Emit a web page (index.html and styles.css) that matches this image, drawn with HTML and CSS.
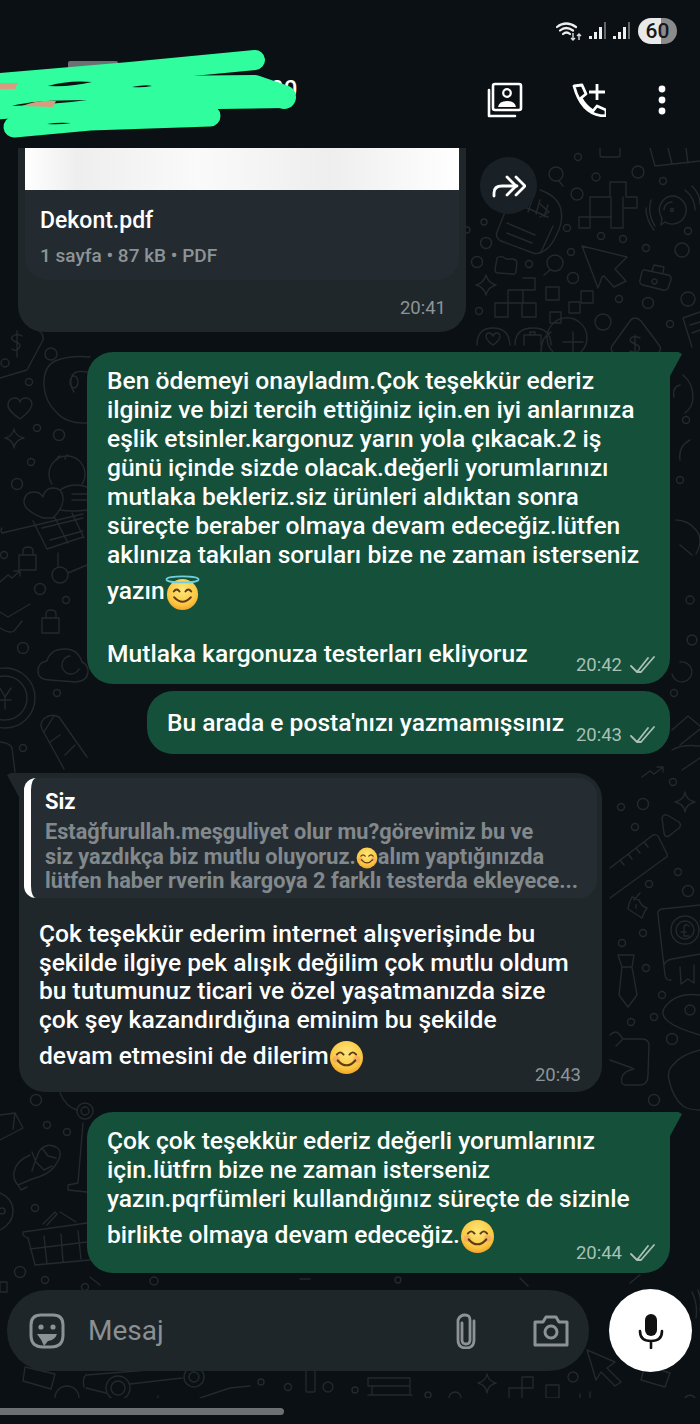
FILE: index.html
```html
<!DOCTYPE html>
<html lang="tr">
<head>
  <meta charset="UTF-8">
  <meta name="viewport" content="width=device-width, initial-scale=1.0">
  <title>Sohbet</title>
  <link rel="stylesheet" href="styles.css">
</head>
<body>

  <!-- Emoji tanimlari -->
  <svg class="defs" width="0" height="0">
    <defs>
      <radialGradient id="face" cx="50%" cy="35%" r="70%">
        <stop offset="0" stop-color="#fde77a"/>
        <stop offset="0.7" stop-color="#fbc53f"/>
        <stop offset="1" stop-color="#f09a22"/>
      </radialGradient>
      <symbol id="emoji-smile" viewBox="0 0 36 36">
        <circle cx="18" cy="18" r="17" fill="url(#face)"/>
        <path d="M8 15q3.500-4.500 7 0M21 15q3.500-4.500 7 0" fill="none" stroke="#5b3a17" stroke-width="2" stroke-linecap="round"/>
        <circle cx="7.500" cy="20" r="3.500" fill="#f59a6a" opacity=".6"/>
        <circle cx="28.500" cy="20" r="3.500" fill="#f59a6a" opacity=".6"/>
        <path d="M9 21q9 10 18 0" fill="none" stroke="#5b3a17" stroke-width="2.200" stroke-linecap="round"/>
      </symbol>
      <symbol id="emoji-halo" viewBox="0 0 36 36">
        <circle cx="18" cy="20" r="16" fill="url(#face)"/>
        <ellipse cx="18" cy="4.500" rx="16.500" ry="3.200" fill="none" stroke="#6fd0dc" stroke-width="1.800"/>
        <path d="M9 17q3-4 6 0M21 17q3-4 6 0" fill="none" stroke="#5b3a17" stroke-width="2" stroke-linecap="round"/>
        <path d="M9.500 23q8.500 9 17 0" fill="none" stroke="#5b3a17" stroke-width="2.200" stroke-linecap="round"/>
      </symbol>
      <symbol id="ticks" viewBox="0 0 28 18">
        <path d="M1 10l6 6L18 2M11 16L24 1M7 16h4" fill="none" stroke="currentColor" stroke-width="1.800" stroke-linecap="round" stroke-linejoin="round"/>
      </symbol>
    </defs>
  </svg>

  <div class="app">
    <header class="topbar">
      <div class="status">
        <svg class="status-wifi" viewBox="0 0 26 20" width="26" height="20">
          <path d="M1 6q9-7 19 0M4 9.500q6-5 13 0M7 13q3.500-3 7 0" fill="none" stroke="#eee" stroke-width="2.200" stroke-linecap="round"/>
          <path d="M17 12v7m-2-2l2 2 2-2M23 19v-6m-2 2l2-2 2 2" fill="none" stroke="#ddd" stroke-width="1.400"/>
        </svg>
        <svg class="status-bars" viewBox="0 0 18 18" width="18" height="18">
          <path d="M0 14h3v3H0zM5 10h3v7H5zM10 5h3v12h-3z" fill="#eee"/><path d="M15 0h2v17h-2z" fill="#666"/>
        </svg>
        <svg class="status-bars" viewBox="0 0 18 18" width="18" height="18">
          <path d="M0 14h3v3H0zM5 10h3v7H5zM10 5h3v12h-3z" fill="#eee"/><path d="M15 0h2v17h-2z" fill="#666"/>
        </svg>
        <div class="battery">60</div>
      </div>

      <div class="toolbar">
        <div class="contact">
          <span class="contact-digits">00</span>
        </div>
        <div class="toolbar-icons">
          <svg viewBox="0 0 36 36" width="36" height="36">
            <rect x="6" y="2" width="28" height="26" rx="2" fill="none" stroke="#fff" stroke-width="2.600"/>
            <path d="M2 8v26h26" fill="none" stroke="#fff" stroke-width="2.600" stroke-linecap="round" stroke-linejoin="round"/>
            <circle cx="20" cy="11" r="3.800" fill="none" stroke="#fff" stroke-width="2.200"/>
            <path d="M11 25q1-6 9-6t9 6z" fill="#fff"/>
          </svg>
          <svg viewBox="0 0 34 34" width="34" height="34">
            <path d="M2 3l8-1 4 9-5 4q4 8 12 13l4-5 9 4v6Q10 33 2 3z" fill="none" stroke="#fff" stroke-width="2.800" stroke-linejoin="round"/>
            <path d="M25 1v16M17 9h16" fill="none" stroke="#fff" stroke-width="2.800"/>
          </svg>
          <svg class="icon-dots" viewBox="0 0 8 30" width="8" height="30">
            <circle cx="4" cy="4" r="3.400" fill="#fff"/>
            <circle cx="4" cy="15" r="3.400" fill="#fff"/>
            <circle cx="4" cy="26" r="3.400" fill="#fff"/>
          </svg>
        </div>
      </div>

      <!-- Karalanmis kisi adi -->
      <svg class="scribble" viewBox="0 0 300 145" width="300" height="145">
        <rect x="68" y="61" width="50" height="10" rx="2" fill="#6c7073"/>
        <g fill="none" stroke="#2ffd9e" stroke-linecap="round" stroke-linejoin="round">
          <path d="M-10 84L130 72 255 60" stroke-width="20"/>
          <path d="M-10 98L150 88 255 87 284 97" stroke-width="24"/>
          <path d="M-10 112L140 102 284 100" stroke-width="16"/>
          <path d="M14 127L90 120 210 116" stroke-width="21"/>
        </g>
        <path d="M48 86q20-6 44-4-20 5-44 4zM132 87q15-3 20-1-10 2-20 1zM12 106q20-6 75-6-30 4-75 6zM47 124q10-2 24-1-10 2-24 1z" fill="#0b1014"/>
        <path d="M0 83h18l-3 6H0zM22 106q15-6 34-5l-3 6z" fill="#d99a7e"/>
      </svg>
    </header>

    <main class="chat">
      <!-- Duvar kagidi deseni, sayfa koordinatlarinda -->
      <svg class="wallpaper" width="700" height="1250" viewBox="0 148 700 1250">
        <g class="doodles">
          <!-- sag ust -->
          <circle cx="556" cy="174" r="7"/><path d="M559 181l4 5"/>
          <circle cx="577" cy="194" r="6"/><circle cx="596" cy="177" r="4"/><circle cx="638" cy="172" r="6"/><circle cx="578" cy="157" r="3.500"/><circle cx="663" cy="181" r="3.500"/>
          <path d="M650 148l5 18 45-5M668 148l4 16M686 148l2 15M600 148v7q0 2 2 2h16q2 0 2-2v-7"/>
          <path d="M590 217v-20h20v-15h16v15h11v11h-14v20h-12v-11h-21v11h-11v-11h11"/>
          <path d="M611 197v20M623 197v11"/>
          <path d="M672 196a14 14 0 1 1-7 26l-4 3 1-7a14 14 0 0 1 10-22z"/><circle cx="672" cy="210" r="1.500"/><path d="M664 210a8 8 0 0 1 8-8M651 200q-4 14 4 26M646 208q0 12 8 22M685 190q10 8 10 20M692 186q8 8 8 18"/>
          <circle cx="567" cy="228" r="3.500"/><circle cx="601" cy="236" r="3.500"/><circle cx="623" cy="239" r="3.500"/><circle cx="646" cy="248" r="3.500"/><circle cx="688" cy="231" r="3.500"/><circle cx="682" cy="250" r="7"/><circle cx="571" cy="252" r="3.500"/>
          <path d="M582 246l45 11-12 12 11 12-12 6-10-11-2 1-4 11z"/>
          <path d="M645 270l23 5q4 1 3 5l-3 8q-1 3-5 2l-20-5q-4-1-3-5l2-8q1-3 3-2zM652 271l2-6 10 2-1 6M652 281a2.500 2.500 0 1 0 5 1 2.500 2.500 0 1 0-5-1z"/>
          <circle cx="555" cy="263" r="8"/><path d="M550 270l-6 5"/>
          <circle cx="573" cy="278" r="5.500"/><rect x="546" y="287" width="13" height="13"/><rect x="550" y="312" width="11" height="11"/><rect x="569" y="302" width="11" height="11"/><rect x="581" y="291" width="12" height="12"/>
          <circle cx="619" cy="299" r="3.500"/><circle cx="648" cy="303" r="5.500"/><circle cx="688" cy="299" r="7"/><circle cx="603" cy="322" r="8"/><circle cx="670" cy="324" r="3.500"/>
          <path d="M635 318q-3 0-5 3l-18 25q-2 4 1 6M635 318q3 0 6 3l18 24q3 4 0 7M635 335v18M640 338q-6-3-9 0t4 6q6 2 4 6t-9 1"/>
          <path d="M553 352a20 20 0 1 1 28 0M573 332v20M563 342h20M551 332q-10 5-10 20M683 318l17-6M683 318l9 29M690 325l10-3M692 333l8-3"/>
          <path d="M540 190q18 6 21 20 3 12-6 28-6 12-15 15M540 204l9 8-9 5"/>
          <!-- belge ile ileri arasi -->
          <circle cx="484" cy="222" r="3"/><circle cx="486" cy="243" r="5.500"/><circle cx="477" cy="262" r="5.500"/><circle cx="467" cy="230" r="3"/><circle cx="529" cy="264" r="3.500"/>
          <path d="M505 212l-8 20q-2 6 4 9l32 12q6 2 9-3l11-24"/><path d="M507 223l28 12M507 233l25 10M520 205l28 12M524 200l-4 10M532 200l-4 12M540 200l-4 14M548 205l-4 12"/>
          <path d="M497 258q2-2 6-1l3 2h6q4 0 5 3l-1 9q0 4-4 3l-13-1q-4 0-4-3z"/>
          <path d="M486 275q2 8 10 10-8 2-10 10-2-8-10-10 8-2 10-10z"/><circle cx="479" cy="311" r="3.500"/>
          <path d="M523 278h12v12h-12v13h13v14h-14v-14h-14v14h-13v-14h13v-13h15"/>
          <path d="M477 345q0-17 16-17t17 17M493 345q-6-4-7-8 0-4 3-4t4 3q1-3 4-3t3 4q-1 4-7 8M515 345q0-17 18-17t18 17M524 345v-10h17v10M530 335v-3h5v3"/>
          <!-- sol -->
          <path d="M0 378l27-8 16-30q1-6-5-10M17 331v26M22 336q-5-3-9 0t3 6q6 2 3 6t-7 1"/>
          <circle cx="51" cy="354" r="6"/><circle cx="5" cy="363" r="4"/><circle cx="29" cy="382" r="3.500"/>
          <path d="M90 357q-20-2-35 4-12 6-11 25 1 16 14 28 10 10 29 9M87 372q-15-3-16 8-1 6 3 12M70 382a4 6 0 1 0 8 0 4 6 0 1 0-8 0z"/>
          <path d="M20 419q-13-9-12-15t7-6q4 0 5 4 1-4 6-4t6 6q0 6-12 15z"/>
          <path d="M14 429q1 7 10 9-9 2-10 10-1-8-9-10 8-2 9-9z"/>
          <circle cx="37" cy="428" r="3.500"/><circle cx="59" cy="435" r="5.500"/><circle cx="31" cy="462" r="3.500"/><circle cx="17" cy="484" r="5.500"/>
          <path d="M52 484a18 18 0 1 1 30 0M60 456q-3 1-3 4M68 455q-3 1-3 4"/>
          <path d="M43 518q-20-8-19-17t10-9q6 0 9 5 2-9 10-9 9 0 10 9 1 10-10 21zM60 490q12-8 27-3M60 510q12 2 27 0M72 494h15M72 500h15"/>
          <path d="M2 528q-2 2 0 5l81-19M33 521l14 28 36-12M42 528l41-10M50 540l33-9M54 516l14 27M72 513l12 25M58 553v14"/>
          <circle cx="60" cy="575" r="8"/><path d="M68 573l19-8"/>
          <path d="M19 555h17v15H19zM23 555v-4q0-4 5-4t5 4v4"/><circle cx="4" cy="555" r="3.500"/>
          <path d="M0 582l8-7 4 3 8-7M14 571h6v5"/>
          <circle cx="40" cy="589" r="5.500"/><circle cx="66" cy="600" r="3.500"/>
          <path d="M42 618h17v15H42zM46 618v-4q0-4 5-4t5 4v4"/>
          <path d="M0 612l8 5 22-13M0 628q10 6 14 3 5-6 8-10"/>
          <circle cx="23" cy="648" r="5.500"/>
          <path d="M50 680q-12 0-12-9t9-10q3-12 18-12 13 0 17 13 6 3 6 9 0 10-12 11zM70 656a9 9 0 1 0 9 13"/>
          <circle cx="57" cy="693" r="3.500"/><circle cx="5" cy="698" r="30"/><circle cx="5" cy="698" r="22"/>
          <path d="M0 688l5 9 6-9M5 697v12M0 700h11"/>
          <circle cx="23" cy="748" r="3.500"/>
          <path d="M0 742q10 1 12 6l3 24M45 718q-6 5-3 11l22 40M45 718q6-5 14-1l28 40M54 716l-10 16M60 735l-10 7M75 745l-10 10"/>
          <!-- sag orta -->
          <path d="M680 662a10 10 0 1 1-8 12M683 375q10 8 10 22 0 10-8 16M680 385q-8 2-6 12M690 440q-12 6-10 20M676 520q12 0 20 10t0 24M680 545l12 10"/>
          <circle cx="674" cy="693" r="3.500"/><circle cx="690" cy="600" r="4"/><circle cx="680" cy="480" r="3.500"/><circle cx="692" cy="640" r="5"/><circle cx="686" cy="420" r="3.500"/>
          <path d="M672 730l16-14 12 10M680 745l20-16M672 750q10-6 28-4M700 758l-18 12"/>
          <!-- sag alt -->
          <path d="M642 777l8-6 4 3 8-6M657 767h6v5"/><circle cx="673" cy="782" r="3.500"/>
          <path d="M685 792q1 8 10 10-9 2-10 10-1-8-10-10 9-2 10-10z"/><circle cx="643" cy="804" r="5.500"/><circle cx="621" cy="807" r="3.500"/><circle cx="635" cy="827" r="3.500"/>
          <path d="M662 818q1-4 5-3l12 7q3 3 0 6l-10 8q-4 2-5-3z"/>
          <path d="M610 868l43-33q3-1 5 1l9 18q1 3-2 4l-55 40M620 860l4 5M628 854l4 5M636 848l4 5M644 842l4 5"/>
          <circle cx="649" cy="884" r="3.500"/><circle cx="678" cy="872" r="3.500"/><circle cx="688" cy="891" r="5.500"/>
          <path d="M640 893l-6 7M632 897q-4 8-4 12l14 9q2-6 5-10-6-2-8-8zM636 905v3"/><circle cx="643" cy="933" r="3.500"/><circle cx="622" cy="943" r="3.500"/>
          <path d="M700 905l-38 4q-5 1-4 6l7 60q1 6 6 5M664 965q2-5 8-6l28-5M680 967l1 17 7-5 6 4v-18"/>
          <circle cx="685" cy="930" r="14"/><circle cx="685" cy="930" r="9"/><path d="M689 926q-5-3-5 2v8h5M681 932h5"/>
          <path d="M618 955h16l-2 12 5 28-9 12-9-12 3-28zM622 967h9"/>
          <circle cx="646" cy="968" r="3.500"/><circle cx="662" cy="995" r="3.500"/><circle cx="654" cy="1017" r="3.500"/><circle cx="631" cy="1022" r="3.500"/><circle cx="672" cy="1039" r="5.500"/><circle cx="654" cy="1100" r="5.500"/>
          <path d="M700 995q-24-3-35 12t35 28"/><circle cx="690" cy="1010" r="5"/>
          <path d="M610 1035q6-6 10 0l3 4h20q6 1 6 6l-1 30q0 10-8 10h-14q-6 0-4-8 2-6 12-8M610 1060l22 8M622 1040l-6 6"/>
          <path d="M700 1050q-20 5-28 16-5 6-3 14 4 18 14 26 6 4 17 4"/>
          <!-- sol alt -->
          <circle cx="36" cy="1100" r="5.500"/><circle cx="85" cy="1111" r="8"/><circle cx="85" cy="1111" r="4"/><path d="M60 1093q6 14 17 17"/>
          <path d="M0 1115l15-2 8 15-23 12M15 1113l-2 16"/><circle cx="47" cy="1125" r="3.500"/><circle cx="67" cy="1132" r="3.500"/>
          <path d="M18 1185l14-6q16-4 22-12 6-8 6-12 1-5-4-8-6-3-10-1-6 2-8 8-4 10-6 17M30 1155q-14 6-16 17-1 8 4 13M32 1152l4 10 8 8 8-4M42 1148l6 8 8 2M18 1185l3 5 6-3"/>
          <path d="M83 1123l-5 60-10 2v5l19 2"/>
          <circle cx="35" cy="1208" r="3.500"/><path d="M0 1193q13 6 13 18t-13 19"/><circle cx="2" cy="1211" r="3"/>
          <path d="M23 1232q-1 4 5 6l7 27 55-5M23 1232l64-9M43 1224l12-12 2 2-10 11M60 1212l16 10M44 1236l3 28M61 1234l2 28M78 1231l3 28M30 1249l57-7"/>
          <circle cx="20" cy="1272" r="5.500"/><circle cx="45" cy="1280" r="3.500"/><circle cx="85" cy="1287" r="3.500"/><rect x="0" y="1282" width="7" height="10"/>
          <path d="M90 1277l10 8M520 1278l8 8M300 1279h10M150 1281a4 4 0 1 0 8 0 4 4 0 1 0-8 0zM395 1280a3 3 0 1 0 6 0 3 3 0 1 0-6 0zM630 1283l10-8"/>
          <!-- alt serit -->
          <path d="M25 1367l30 7-4 15-28-8zM36 1370l1-4 8 2-1 4"/><path d="M55 1398a12 12 0 0 1 24 0"/>
          <path d="M86 1375l100-8q6 0 8 3M86 1375q-4 3-2 12M106 1393l-20-5M130 1384l52-6"/>
          <circle cx="118" cy="1388" r="12"/><circle cx="118" cy="1388" r="7"/><circle cx="194" cy="1377" r="10"/><circle cx="194" cy="1377" r="5"/>
          <path d="M200 1398l30-10 20-2M158 1398v-2"/>
          <circle cx="261" cy="1382" r="3"/><circle cx="288" cy="1387" r="3.500"/><rect x="306" y="1368" width="9" height="24" rx="1"/><circle cx="328" cy="1387" r="5"/><circle cx="355" cy="1390" r="3"/>
          <path d="M368 1378h42v8h-42zM372 1386h38v9h-38zM368 1395h44"/>
          <path d="M487 1374q1 7 9 9-8 2-9 10-1-8-9-10 8-2 9-9z"/><path d="M509 1398v-10h13v-11h11v11h-11v10"/>
          <rect x="546" y="1385" width="13" height="13"/><circle cx="573" cy="1377" r="5"/><circle cx="428" cy="1395" r="3"/><path d="M449 1398a6 6 0 0 1 12 0M580 1398v-4M590 1398v-6M685 1398a6 6 0 0 1 10 0"/>
          <path d="M587 1350l28 12-8 6 14 14-6 4-14-14-5 8z"/><path d="M645 1365l25 8-5 14-24-7zM654 1368l2-4 7 2-1 4M692 1292q6 12 4 26M698 1290q4 10 2 20"/>
        </g>
      </svg>

      <div class="messages">
        <div class="row-doc">
          <div class="bubble bubble-in bubble-doc">
            <div class="doc-preview"></div>
            <div class="doc-info">
              <div class="doc-name">Dekont.pdf</div>
              <div class="doc-meta">1 sayfa • 87 kB • PDF</div>
            </div>
            <div class="meta meta-doc"><span>20:41</span></div>
          </div>
          <div class="forward">
            <svg viewBox="0 0 34 24" width="34" height="24">
              <path d="M2 22v-3q0-7 8-7h15" fill="none" stroke="#fff" stroke-width="2.800" stroke-linecap="round"/>
              <path d="M15 3l9 9-9 9M24 3l9 9-9 9" fill="none" stroke="#fff" stroke-width="2.800" stroke-linecap="round" stroke-linejoin="round"/>
            </svg>
          </div>
        </div>

        <div class="bubble bubble-out bubble-tail msg-long">
          <p class="text">Ben ödemeyi onayladım.Çok teşekkür ederiz<br>ilginiz ve bizi tercih ettiğiniz için.en iyi anlarınıza<br>eşlik etsinler.kargonuz yarın yola çıkacak.2 iş<br>günü içinde sizde olacak.değerli yorumlarınızı<br>mutlaka bekleriz.siz ürünleri aldıktan sonra<br>süreçte beraber olmaya devam edeceğiz.lütfen<br>aklınıza takılan soruları bize ne zaman isterseniz<br>yazın<svg class="emoji"><use href="#emoji-halo"/></svg><br><br>Mutlaka kargonuza testerları ekliyoruz</p>
          <div class="meta"><span>20:42</span><svg class="tick"><use href="#ticks"/></svg></div>
        </div>

        <div class="bubble bubble-out msg-short">
          <p class="text">Bu arada e posta'nızı yazmamışsınız</p>
          <div class="meta"><span>20:43</span><svg class="tick"><use href="#ticks"/></svg></div>
        </div>

        <div class="bubble bubble-in bubble-tail-in msg-reply">
          <div class="quote">
            <div class="quote-name">Siz</div>
            <div class="quote-text">Estağfurullah.meşguliyet olur mu?görevimiz bu ve<br>siz yazdıkça biz mutlu oluyoruz.<svg class="emoji emoji-small"><use href="#emoji-smile"/></svg>alım yaptığınızda<br>lütfen haber rverin kargoya 2 farklı testerda ekleyece...</div>
          </div>
          <p class="text text-in">Çok teşekkür ederim internet alışverişinde bu<br>şekilde ilgiye pek alışık değilim çok mutlu oldum<br>bu tutumunuz ticari ve özel yaşatmanızda size<br>çok şey kazandırdığına eminim bu şekilde<br>devam etmesini de dilerim<svg class="emoji"><use href="#emoji-smile"/></svg></p>
          <div class="meta meta-in"><span>20:43</span></div>
        </div>

        <div class="bubble bubble-out bubble-tail msg-last">
          <p class="text">Çok çok teşekkür ederiz değerli yorumlarınız<br>için.lütfrn bize ne zaman isterseniz<br>yazın.pqrfümleri kullandığınız süreçte de sizinle<br>birlikte olmaya devam edeceğiz.<svg class="emoji"><use href="#emoji-smile"/></svg></p>
          <div class="meta"><span>20:44</span><svg class="tick"><use href="#ticks"/></svg></div>
        </div>
      </div>

      <div class="composer">
        <div class="composer-field">
          <svg class="composer-sticker" viewBox="0 0 36 36" width="36" height="36">
            <path d="M12 2h12q10 0 10 10v10Q34 34 22 34h-8Q2 34 2 22V12Q2 2 12 2z" fill="none" stroke="#8d9295" stroke-width="3"/>
            <circle cx="12" cy="14" r="2.600" fill="#8d9295"/><circle cx="24" cy="14" r="2.600" fill="#8d9295"/>
            <path d="M8 21h20q-2 6-9 7l-4 5q-2-6-7-12z" fill="#8d9295"/>
          </svg>
          <span class="composer-placeholder">Mesaj</span>
          <svg class="composer-clip" viewBox="0 0 24 36" width="24" height="36">
            <path d="M8 10v17q0 4 4 4t4-4V7q0-5-5-5T4 7v20q0 8 8 8t8-8V8" fill="none" stroke="#8d9295" stroke-width="2.800" stroke-linecap="round"/>
          </svg>
          <svg class="composer-camera" viewBox="0 0 36 32" width="36" height="32">
            <path d="M2 7h8l3-5h10l3 5h8v23H2z" fill="none" stroke="#8d9295" stroke-width="3" stroke-linejoin="round"/>
            <circle cx="18" cy="17" r="6" fill="none" stroke="#8d9295" stroke-width="3"/>
          </svg>
        </div>
        <button class="mic">
          <svg viewBox="0 0 26 36" width="26" height="36">
            <rect x="7" y="1" width="12" height="22" rx="6" fill="#111"/>
            <path d="M2 18q0 10 11 10t11-10M13 28v7" fill="none" stroke="#111" stroke-width="2.600" stroke-linecap="round"/>
          </svg>
        </button>
      </div>
    </main>

    <footer class="navbar">
      <div class="navbar-handle"></div>
    </footer>
  </div>

</body>
</html>
```

FILE: styles.css
```css
* {
  margin: 0;
  padding: 0;
  box-sizing: border-box;
}

html, body {
  height: 100%;
  background-color: #0b1014;
  font-family: Roboto, "Noto Sans", sans-serif;
  color: #fff;
}

.defs {
  display: block;
  height: 0;
}

.app {
  display: flex;
  flex-direction: column;
  width: 700px;
  height: 1424px;
  overflow: hidden;
}

/* Ust bar */
.topbar {
  position: relative;
  flex: 0 0 148px;
  background-color: #0b1014;
}

.status {
  display: flex;
  align-items: center;
  justify-content: flex-end;
  gap: 6px;
  height: 26px;
  margin-top: 18px;
  padding-right: 23px;
}

.status-wifi {
  margin-right: 1px;
}

.battery {
  width: 39px;
  height: 26px;
  border-radius: 13px;
  margin-left: 1px;
  background: linear-gradient(90deg, #e9e9e9 59%, #8b8b8b 59%);
  color: #15181a;
  font-size: 21px;
  font-weight: 500;
  line-height: 26px;
  text-align: center;
}

.toolbar {
  display: flex;
  align-items: center;
  justify-content: space-between;
  height: 40px;
  margin-top: 36px;
  padding-right: 34px;
}

.contact {
  padding-left: 270px;
  padding-bottom: 22px;
}

.contact-digits {
  font-size: 24px;
  font-weight: 500;
}

.toolbar-icons {
  display: flex;
  align-items: center;
  gap: 49px;
}

.icon-dots {
  margin-left: 3px;
}

.scribble {
  position: absolute;
  left: 0;
  top: 0;
}

/* Sohbet alani */
.chat {
  position: relative;
  display: flex;
  flex-direction: column;
  flex: 1;
  min-height: 0;
  background-color: #0b1014;
}

.wallpaper {
  position: absolute;
  left: 0;
  top: 0;
}

.doodles {
  fill: none;
  stroke: #23292d;
  stroke-width: 1.400;
  stroke-linecap: round;
  stroke-linejoin: round;
}

.messages {
  position: relative;
  display: flex;
  flex-direction: column;
  align-items: flex-end;
  flex: 1;
  min-height: 0;
  padding-right: 30px;
}

.bubble {
  position: relative;
  border-radius: 26px;
}

.bubble-out {
  background-color: #14503a;
  padding: 14px 12px 7px 20px;
}

.bubble-in {
  background-color: #1f272b;
}

.bubble-tail {
  border-top-right-radius: 0;
}

.bubble-tail::after {
  content: "";
  position: absolute;
  left: 100%;
  top: 0;
  width: 12px;
  height: 24px;
  background-color: #14503a;
  clip-path: polygon(0 0, 70% 0, 100% 8%, 0 100%);
}

.bubble-tail-in {
  border-top-left-radius: 0;
}

.bubble-tail-in::after {
  content: "";
  position: absolute;
  right: 100%;
  top: 0;
  width: 12px;
  height: 24px;
  background-color: #1f272b;
  clip-path: polygon(100% 0, 30% 0, 0 8%, 100% 100%);
}

.text {
  font-size: 24.600px;
  font-weight: 500;
  line-height: 29px;
  white-space: nowrap;
}

.emoji {
  width: 35px;
  height: 35px;
  margin-top: 6px;
  vertical-align: -11px;
}

.emoji-small {
  width: 22px;
  height: 22px;
  margin-top: 0;
  vertical-align: -5px;
}

.meta {
  display: flex;
  align-items: center;
  justify-content: flex-end;
  gap: 8px;
  margin-top: -12px;
  color: #a9c0b5;
  font-size: 18.500px;
  line-height: 22px;
}

.tick {
  width: 28px;
  height: 18px;
}

/* Belge mesaji */
.row-doc {
  display: flex;
  align-items: flex-start;
  gap: 14px;
  margin-right: 133px;
  margin-bottom: 20px;
}

.bubble-doc {
  width: 448px;
  height: 184px;
  padding: 0 7px;
  border-radius: 0 0 26px 26px;
}

.doc-preview {
  height: 42px;
  background: linear-gradient(90deg, #fff, #eee 12%, #fafafa 40%, #eee 70%, #fff);
}

.doc-info {
  height: 90px;
  padding: 17px 15px 0;
  background-color: #232b30;
  border-radius: 0 0 22px 22px;
}

.doc-name {
  font-size: 23px;
  font-weight: 500;
  line-height: 28px;
}

.doc-meta {
  margin-top: 9px;
  color: #8d9498;
  font-size: 19px;
  font-weight: 500;
  line-height: 24px;
}

.meta-doc {
  margin-top: 17px;
  padding-right: 13px;
  color: #8d9498;
}

.forward {
  display: flex;
  align-items: center;
  justify-content: center;
  width: 57px;
  height: 57px;
  margin-top: 9px;
  border-radius: 50%;
  background-color: #1a2126;
}

/* Mesaj genislikleri */
.msg-long {
  width: 583px;
  height: 332px;
}

.msg-long .meta {
  margin-top: -14px;
}

.msg-short {
  width: 523px;
  height: 63px;
  margin-top: 7px;
  padding-top: 17px;
}

.msg-short .meta {
  margin-top: -13px;
}

.msg-reply {
  align-self: flex-start;
  width: 583px;
  height: 319px;
  margin-top: 19px;
  margin-left: 19px;
  padding: 5px 5px 0;
}

.msg-last {
  width: 583px;
  height: 161px;
  margin-top: 20px;
}

/* Alinti */
.quote {
  height: 120px;
  padding: 12px 0 0 14px;
  background-color: #262d32;
  border-left: 7px solid #fff;
  border-radius: 12px 18px 18px 12px;
}

.quote-name {
  font-size: 22px;
  font-weight: 700;
  line-height: 24px;
}

.quote-text {
  margin-top: 6px;
  color: #82898d;
  font-size: 21.700px;
  font-weight: 700;
  line-height: 24.500px;
  white-space: nowrap;
}

.text-in {
  margin-top: 22px;
  padding-left: 15px;
  line-height: 28.500px;
}

.meta-in {
  margin-top: -11px;
  padding-right: 16px;
  color: #8d9498;
}

/* Mesaj yazma alani */
.composer {
  position: relative;
  display: flex;
  align-items: center;
  justify-content: space-between;
  padding: 0 8px 26px 7px;
}

.composer-field {
  display: flex;
  align-items: center;
  width: 582px;
  height: 81px;
  padding: 0 20px 0 22px;
  border-radius: 40px;
  background-color: #1f2629;
}

.composer-placeholder {
  flex: 1;
  margin-left: 23px;
  color: #8a9094;
  font-size: 28px;
}

.composer-clip {
  margin-right: 55px;
}

.mic {
  display: flex;
  align-items: center;
  justify-content: center;
  width: 83px;
  height: 83px;
  border: none;
  border-radius: 50%;
  background-color: #fff;
}

/* Alt bar */
.navbar {
  flex: 0 0 26px;
  padding-top: 10px;
  background-color: #0b1014;
}

.navbar-handle {
  width: 284px;
  height: 7px;
  border-radius: 0 4px 4px 0;
  background-color: #6c7073;
}
```
